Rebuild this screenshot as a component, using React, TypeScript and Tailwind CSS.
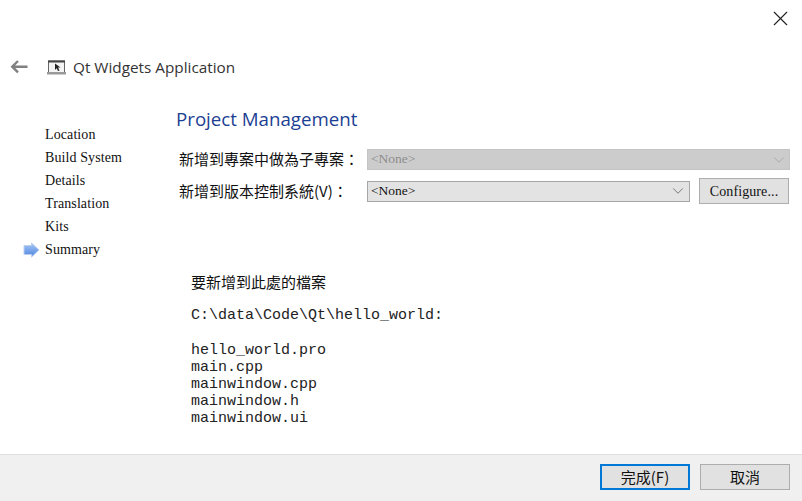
import { ChevronDown, X } from 'lucide-react'

const steps = ['Location', 'Build System', 'Details', 'Translation', 'Kits', 'Summary']
const files = ['hello_world.pro', 'main.cpp', 'mainwindow.cpp', 'mainwindow.h', 'mainwindow.ui']

const cjk = "font-['Noto_Sans_CJK_TC','Noto_Sans_CJK_SC',sans-serif]"

function StepArrow() {
  return (
    <svg width="17" height="16" viewBox="0 0 17 16">
      <defs>
        <linearGradient id="stepFill" x1="0" y1="0" x2="0" y2="1">
          <stop offset="0" stopColor="#a5c6f4" />
          <stop offset="1" stopColor="#4f86e0" />
        </linearGradient>
      </defs>
      <path d="M1 3.5H8.5V1L16 8L8.5 15V12.5H1Z" fill="url(#stepFill)" stroke="#b9cfee" strokeWidth="1" />
    </svg>
  )
}

function WizardIcon() {
  return (
    <svg width="19" height="15" viewBox="0 0 19 15">
      <rect x="1.5" y="1" width="16" height="11.5" fill="#f4f4f4" stroke="#666" strokeWidth="1" />
      <rect x="1" y="0.5" width="17" height="2" fill="#444" />
      <rect x="0" y="12" width="19" height="2.5" fill="#9a9a9a" />
      <path d="M8 3.5L13.5 7.5H11L12.5 10.5L11 11L9.7 8.2L8 10Z" fill="#222" />
    </svg>
  )
}

export default function App() {
  return (
    <div className="w-[802px] h-[501px] bg-white flex flex-col overflow-hidden font-['Liberation_Serif',serif] text-[#111]">
      <div className="h-[39px] flex justify-end items-start pt-[6px] pr-[9px]">
        <X size={25} strokeWidth={1.1} className="text-[#222]" />
      </div>

      <div className="h-[56px] flex items-center pl-[10px]">
        <svg width="18" height="14" viewBox="0 0 18 14">
          <path d="M17.5 6.7H3M8 1L2.2 6.7L8 12.4" fill="none" stroke="#808080" strokeWidth="2.4" />
        </svg>
        <div className="ml-[19px] mr-[7px] flex">
          <WizardIcon />
        </div>
        <span className="font-['Open_Sans',sans-serif] text-[15.3px] text-[#333]">Qt Widgets Application</span>
      </div>

      <div className="flex-1 flex min-h-0">
        <div className="w-[176px] pt-[28px] shrink-0">
          {steps.map((s) => (
            <div key={s} className="h-[23px] flex items-center text-[14px] tracking-[0.1px]">
              <div className="w-[45px] flex justify-end pr-[5px]">{s === 'Summary' && <StepArrow />}</div>
              <span>{s}</span>
            </div>
          ))}
        </div>

        <div className="flex-1 min-w-0">
          <div className="h-[20px] mt-[14px] flex items-center font-['Open_Sans',sans-serif] text-[18.7px] text-[#1c3f94]">
            Project Management
          </div>

          <div className="mt-[20px] flex items-center h-[21px]">
            <div className={`w-[191px] pl-[3px] text-[15px] whitespace-nowrap ${cjk}`}>新增到專案中做為子專案：</div>
            <div className="w-[423px] h-[21px] bg-[#cccccc] border border-[#c4c4c4] flex items-center justify-between pl-[3px] pr-[1px] text-[13.5px] text-[#8c8c8c]">
              <span>&lt;None&gt;</span>
              <ChevronDown size={18} strokeWidth={0.9} className="text-[#999]" />
            </div>
          </div>

          <div className="mt-[8px] flex items-center h-[26px]">
            <div className={`w-[191px] pl-[3px] text-[15px] whitespace-nowrap ${cjk}`}>新增到版本控制系統(V)：</div>
            <div className="w-[323px] h-[21px] bg-[#e3e3e3] border border-[#a6a6a6] flex items-center justify-between pl-[3px] pr-[2px] text-[13.5px]">
              <span>&lt;None&gt;</span>
              <ChevronDown size={18} strokeWidth={0.9} className="text-[#444]" />
            </div>
            <div className="ml-[9px] w-[90px] h-[26px] bg-[#e1e1e1] border border-[#adadad] flex items-center justify-center text-[14px] tracking-[0.1px]">
              Configure...
            </div>
          </div>

          <div className="mt-[68px] pl-[15px]">
            <div className={`text-[15px] h-[20px] leading-[20px] ${cjk}`}>要新增到此處的檔案</div>
            <div className="mt-[15px] font-['Liberation_Mono',monospace] text-[15px] leading-[17px] text-[#222]">
              <div>C:\data\Code\Qt\hello_world:</div>
              <div className="h-[18px]" />
              {files.map((f) => (
                <div key={f}>{f}</div>
              ))}
            </div>
          </div>
        </div>
      </div>

      <div className="h-[47px] bg-[#f0f0f0] border-t border-[#dfdfdf] flex justify-end gap-[10px] pt-[9px] pr-[12px]">
        <div className={`w-[90px] h-[26px] bg-[#e1e1e1] border-2 border-[#0078d7] flex items-center justify-center text-[15px] ${cjk}`}>
          完成(F)
        </div>
        <div className={`w-[90px] h-[26px] bg-[#e1e1e1] border border-[#adadad] flex items-center justify-center text-[15px] ${cjk}`}>
          取消
        </div>
      </div>
    </div>
  )
}
